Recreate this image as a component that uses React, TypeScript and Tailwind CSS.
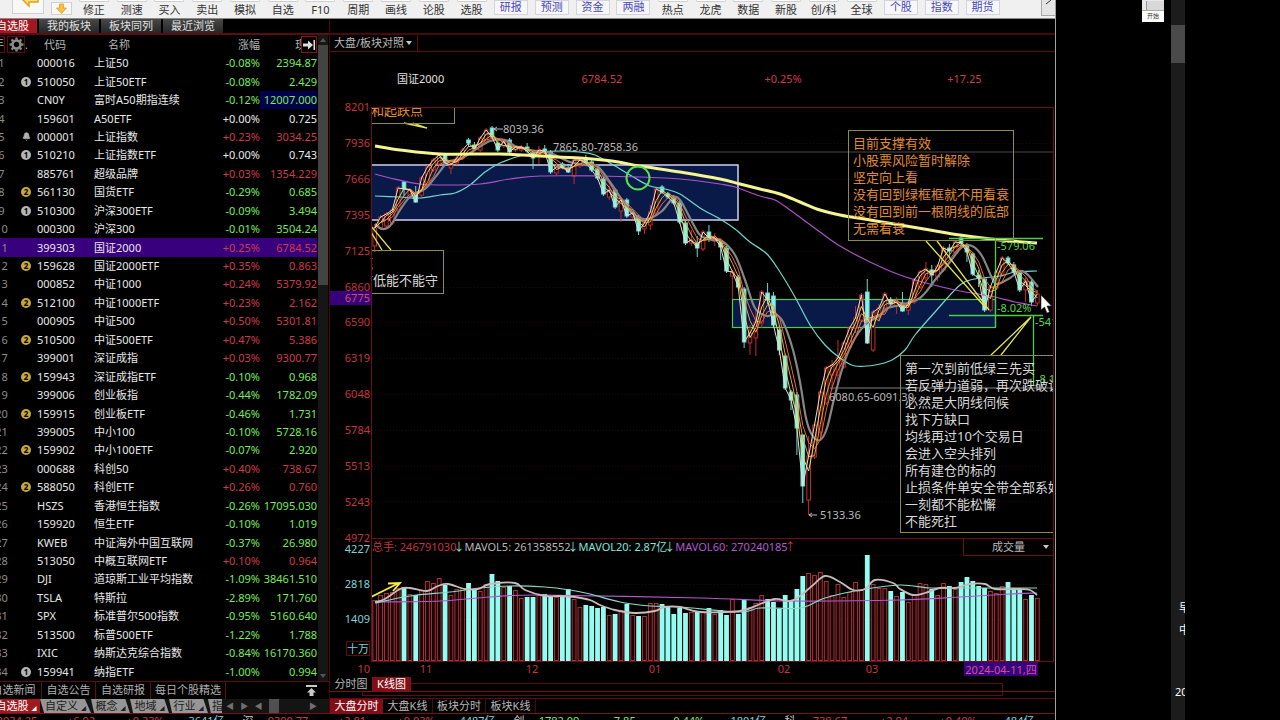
import { Bell } from "lucide-react";
import clsx from "clsx";

type Quote = [mark: string, code: string, name: string, pct: string, price: string];

// mark: "1" grey badge, "2" gold badge, "b" alarm bell
const quotes: Quote[] = [
  ["", "000016", "上证50", "-0.08%", "2394.87"],
  ["1", "510050", "上证50ETF", "-0.08%", "2.429"],
  ["", "CN0Y", "富时A50期指连续", "-0.12%", "12007.000"],
  ["", "159601", "A50ETF", "+0.00%", "0.725"],
  ["b", "000001", "上证指数", "+0.23%", "3034.25"],
  ["1", "510210", "上证指数ETF", "+0.00%", "0.743"],
  ["", "885761", "超级品牌", "+0.03%", "1354.229"],
  ["2", "561130", "国货ETF", "-0.29%", "0.685"],
  ["1", "510300", "沪深300ETF", "-0.09%", "3.494"],
  ["", "000300", "沪深300", "-0.01%", "3504.24"],
  ["", "399303", "国证2000", "+0.25%", "6784.52"],
  ["2", "159628", "国证2000ETF", "+0.35%", "0.863"],
  ["", "000852", "中证1000", "+0.24%", "5379.92"],
  ["2", "512100", "中证1000ETF", "+0.23%", "2.162"],
  ["", "000905", "中证500", "+0.50%", "5301.81"],
  ["2", "510500", "中证500ETF", "+0.47%", "5.386"],
  ["", "399001", "深证成指", "+0.03%", "9300.77"],
  ["2", "159943", "深证成指ETF", "-0.10%", "0.968"],
  ["", "399006", "创业板指", "-0.44%", "1782.09"],
  ["2", "159915", "创业板ETF", "-0.46%", "1.731"],
  ["", "399005", "中小100", "-0.10%", "5728.16"],
  ["2", "159902", "中小100ETF", "-0.07%", "2.920"],
  ["", "000688", "科创50", "+0.40%", "738.67"],
  ["2", "588050", "科创ETF", "+0.26%", "0.760"],
  ["", "HSZS", "香港恒生指数", "-0.26%", "17095.030"],
  ["", "159920", "恒生ETF", "-0.10%", "1.019"],
  ["", "KWEB", "中证海外中国互联网", "-0.37%", "26.980"],
  ["", "513050", "中概互联网ETF", "+0.10%", "0.964"],
  ["", "DJI", "道琼斯工业平均指数", "-1.09%", "38461.510"],
  ["", "TSLA", "特斯拉", "-2.89%", "171.760"],
  ["", "SPX", "标准普尔500指数", "-0.95%", "5160.640"],
  ["", "513500", "标普500ETF", "-1.22%", "1.788"],
  ["", "IXIC", "纳斯达克综合指数", "-0.84%", "16170.360"],
  ["1", "159941", "纳指ETF", "-1.00%", "0.994"],
];

const tools = [
  "修正", "测速", "买入", "卖出", "模拟", "自选", "F10", "周期", "画线", "论股", "选股",
  "*研报", "*预测", "*资金", "*两融",
  "热点", "龙虎", "数据", "新股", "创/科", "全球",
  "*个股", "*指数", "*期货",
];

const ticker = [
  ["沪", "3034.25", "+6.92", "+0.23%", "3641亿"],
  ["深", "9300.77", "+2.81", "+0.03%", "4487亿"],
  ["创", "1782.09", "-7.85", "-0.44%", "1801亿"],
  ["科", "738.67", "+2.94", "+0.40%", "484亿"],
];

// [body top, body bottom, wick top, wick bottom] on the plot
const candles: [number, number, number?, number?][] = [
  [228, 246, 224, 252], [217, 228], [214, 226], [210, 223], [188, 210],
  [182, 189, 181, 196], [190, 196], [193, 202, 186, 203], [178, 195], [167, 186],
  [160, 170], [155, 164], [155, 163], [165, 168, 162, 174], [158, 163],
  [150, 158], [140, 143, 138, 147], [145, 149, 142, 151], [138, 150], [130, 142],
  [128, 137], [143, 150, 140, 152], [141, 146], [140, 152], [147, 150],
  [147, 150], [147, 151, 143, 153], [153, 158, 150, 169], [150, 155, 146, 164], [149, 151, 145, 154],
  [152, 172], [167, 173, 164, 175], [164, 167], [168, 172, 164, 173], [160, 176, 158, 184],
  [160, 166], [158, 163, 155, 166], [162, 170, 158, 172], [169, 178], [179, 194],
  [190, 197, 186, 200], [190, 207], [200, 211, 197, 222], [200, 216], [213, 217],
  [217, 231, 215, 235], [223, 229, 221, 234], [212, 225, 205, 230], [189, 213], [187, 192],
  [194, 197], [197, 203], [203, 222], [223, 243], [240, 243, 230, 246],
  [243, 248, 236, 257], [232, 249], [232, 238, 225, 242], [238, 241, 233, 246], [242, 247, 240, 260],
  [248, 271], [272, 276, 270, 299], [277, 287], [289, 342, 287, 348], [333, 343, 325, 355],
  [322, 338, 310, 356], [292, 323, 290, 328], [293, 300, 283, 304], [296, 325, 292, 328], [330, 350, 326, 355],
  [356, 388, 354, 390], [392, 400, 390, 410], [395, 428, 392, 455], [435, 486, 435, 503], [456, 500, 436, 515],
  [425, 457], [392, 432, 390, 438], [368, 403], [365, 375, 360, 390], [358, 375, 340, 384],
  [343, 367], [328, 347], [318, 328, 306, 333], [295, 320], [292, 343, 279, 344],
  [312, 350], [308, 317, 304, 320], [294, 308], [300, 304, 297, 308], [302, 306, 297, 314],
  [303, 311, 292, 312], [304, 310, 300, 315], [280, 302], [272, 287], [269, 278, 262, 282],
  [270, 275, 265, 287], [266, 277, 264, 281], [248, 270], [248, 251, 244, 257], [242, 252],
  [238, 243], [245, 252, 243, 262], [254, 274], [275, 278, 270, 287], [279, 310],
  [287, 310], [272, 288], [258, 275], [258, 263], [265, 272, 262, 276],
  [273, 290], [281, 290, 278, 302], [282, 302, 280, 306], [294, 303, 290, 306],
];

const volumeTops = [
  600, 595, 593, 592, 588, 587, 594, 595, 590, 581, 583, 578, 585, 595, 589, 588, 583, 589, 591, 584,
  574, 581, 587, 586, 590, 598, 597, 597, 595, 594, 597, 597, 597, 589, 599, 607, 605, 606, 608, 607,
  615, 614, 610, 604, 615, 616, 616, 603, 603, 604, 607, 614, 608, 613, 612, 612, 612, 608, 614, 610,
  615, 599, 614, 599, 607, 603, 595, 599, 602, 609, 595, 601, 589, 576, 573, 575, 572, 581, 595, 584,
  597, 592, 582, 590, 555, 584, 588, 588, 591, 596, 592, 602, 594, 583, 584, 589, 595, 583, 586, 589,
  582, 577, 581, 586, 588, 591, 593, 586, 582, 588, 589, 599, 595, 598,
];

const falling = new Set([
  5, 7, 12, 16, 17, 20, 21, 23, 26, 27, 29, 30, 32, 33, 36, 37, 38, 39, 41, 43, 45, 49, 50, 51, 52, 53, 55,
  57, 59, 60, 62, 63, 67, 68, 69, 70, 71, 72, 73, 84, 88, 90, 95, 98, 100, 101, 102, 103, 104, 108, 109, 110, 112,
]);

const barX = (i: number) => 374.7 + i * 5.864;

type Point = [number, number];

const grayLine: Point[] = [[375, 224], [382, 229], [390, 226], [400, 210], [410, 197], [425, 189], [437, 175], [448, 162], [460, 159], [475, 150], [490, 141], [505, 140], [515, 146], [530, 150], [550, 153], [570, 162], [585, 165], [597, 166], [610, 182], [625, 204], [638, 217], [648, 219], [662, 211], [673, 198], [680, 200], [690, 218], [700, 235], [712, 240], [722, 241], [735, 255], [745, 280], [755, 308], [767, 316], [775, 314], [783, 322], [793, 350], [800, 382], [806, 418], [812, 435], [820, 440], [827, 428], [835, 395], [845, 360], [855, 338], [865, 325], [880, 315], [888, 308], [900, 305], [920, 298], [935, 280], [950, 262], [962, 247], [972, 246], [982, 256], [992, 278], [997, 284], [1010, 278], [1020, 271], [1028, 275], [1038, 287]];
const yellowLine: Point[] = [[375, 146], [400, 150], [440, 154], [500, 154], [540, 156], [580, 158], [612, 161], [640, 166], [680, 172], [720, 179], [740, 184], [760, 189], [780, 194], [800, 202], [820, 210], [840, 215], [870, 220], [900, 225], [930, 230], [960, 235], [1000, 240], [1037, 243]];
const magentaLine: Point[] = [[375, 174], [390, 178], [420, 184], [450, 185], [480, 184], [510, 179], [540, 176], [600, 176], [640, 177], [680, 179], [720, 184], [735, 187], [760, 196], [775, 200], [790, 210], [805, 221], [820, 232], [840, 246], [870, 262], [900, 275], [930, 284], [960, 291], [990, 296], [1015, 302], [1037, 306]];
const cyanLine: Point[] = [[375, 196], [400, 197], [420, 198], [440, 195], [455, 193], [470, 185], [485, 172], [500, 163], [520, 156], [540, 152], [560, 151], [580, 152], [595, 155], [615, 166], [635, 178], [650, 186], [665, 189], [680, 194], [700, 208], [720, 219], [735, 229], [750, 242], [767, 254], [780, 272], [795, 297], [810, 325], [825, 345], [840, 358], [855, 366], [875, 365], [892, 360], [905, 350], [915, 335], [935, 312], [960, 285], [975, 279], [1000, 276], [1015, 272], [1037, 271]];

const vol5: Point[] = [[375, 602], [385, 599], [400, 589], [410, 588], [427, 591], [438, 586], [448, 584], [465, 589], [478, 589], [490, 584], [515, 583], [525, 590], [545, 596], [560, 596], [575, 597], [590, 600], [600, 605], [615, 610], [635, 613], [655, 611], [665, 607], [680, 607], [700, 612], [740, 611], [760, 604], [775, 599], [790, 601], [800, 596], [812, 586], [825, 576], [840, 582], [853, 590], [865, 589], [875, 580], [893, 583], [900, 589], [913, 595], [925, 593], [940, 588], [955, 588], [970, 584], [985, 584], [995, 589], [1020, 589], [1030, 590], [1037, 595]];
const vol20: Point[] = [[375, 603], [410, 596], [450, 592], [480, 588], [510, 586], [545, 587], [570, 590], [590, 594], [620, 602], [650, 606], [680, 607], [740, 612], [760, 608], [800, 608], [825, 598], [860, 590], [900, 585], [930, 588], [960, 588], [1000, 588], [1037, 588]];
const vol60: Point[] = [[375, 602], [440, 601], [490, 597], [540, 595], [700, 598], [790, 601], [900, 600], [960, 597], [1010, 594], [1037, 593]];

// Catmull-Rom through the points
const curve = (p: Point[]) => {
  let d = `M${p[0][0]} ${p[0][1]}`;
  for (let i = 0; i < p.length - 1; i++) {
    const a = p[i - 1] ?? p[i];
    const b = p[i];
    const c = p[i + 1];
    const e = p[i + 2] ?? c;
    d += `C${b[0] + (c[0] - a[0]) / 6} ${b[1] + (c[1] - a[1]) / 6} ${c[0] - (e[0] - b[0]) / 6} ${c[1] - (e[1] - b[1]) / 6} ${c[0]} ${c[1]}`;
  }
  return d;
};

const average = (n: number) => {
  const closes = candles.map(([top, bottom], i) => (falling.has(i) ? bottom : top));
  return closes
    .map((_, i) => {
      const part = closes.slice(Math.max(0, i - n + 1), i + 1);
      return `${barX(i)},${part.reduce((a, b) => a + b, 0) / part.length}`;
    })
    .join(" ");
};

const tone = (v: string) =>
  v.startsWith("+0.00") ? "text-[#e8e8e8]" : v.startsWith("-") ? "text-[#78ea5c]" : "text-[#cc3c4c]";

const Caret = ({ className }: { className: string }) => (
  <svg width="6" height="4" className={clsx("pointer-events-none shrink-0", className)}>
    <path d="M0 0h6L3 4z" fill="#c8c8c8" />
  </svg>
);

const Toolbar = () => (
  <header className="flex h-[19px] shrink-0 overflow-hidden border-b border-[#8a8a8a] bg-[#f0f0f0] text-[11px] leading-[18px] text-[#333]">
    <div className="flex w-[75px] shrink-0 items-start">
      <button aria-label="返回" className="ml-3 h-[14px] w-8 border border-t-0 border-[#d0d0d0] bg-[#f8f8f8]">
        <svg width="30" height="13" className="block">
          <path d="M8 -2 L16 6 V2 H25 V-2" fill="#ffe27a" stroke="#e0a020" strokeWidth="1.5" />
        </svg>
      </button>
      <button aria-label="下移" className="mt-0.5 ml-[7px] h-[13px] w-[21px] border border-[#d0d0d0] bg-[#f8f8f8]">
        <svg width="19" height="11" className="block">
          <path d="M7.5 1h4v4h3l-5 5.500-5-5.500h3z" fill="#f8c040" stroke="#e09820" strokeWidth="0.7" />
        </svg>
      </button>
    </div>
    <nav className="mr-[38px] flex flex-1">
      {tools.map((t) =>
        t.startsWith("*") ? (
          <button key={t} className="flex flex-[408] justify-center text-[#4848b8]">
            <span className="h-[15px] w-[34px] border border-[#d4d4dc] bg-[#f7f7fa] leading-[12px]">{t.slice(1)}</span>
          </button>
        ) : (
          <button key={t} className="flex flex-[377] flex-col items-center">
            <span className="h-0.5 w-[30px] shrink-0 rounded-b-sm border border-t-0 border-[#cfcfcf] bg-white" />
            <span className="leading-[15px]">{t}</span>
          </button>
        ),
      )}
    </nav>
    <button aria-label="更多" className="flex h-4 w-[14px] items-start justify-center border border-r-0 border-t-0 border-[#a8a8a8] bg-[#e4e4e4]">
      <svg width="8" height="5"><path d="M1 4 L6 0" stroke="#333" fill="none" /></svg>
    </button>
  </header>
);

const Badge = ({ mark }: { mark: string }) => {
  if (mark === "b") return <Bell className="mx-auto block fill-[#b0b0b0] text-[#b0b0b0]" size={9} />;
  if (!mark) return null;
  return (
    <span
      className={clsx(
        "mx-auto block h-[10px] w-[10px] rounded-full text-center text-[8px] leading-[10px] font-bold text-black",
        mark === "1" ? "bg-[#b4b4b4]" : "bg-[#c8a838]",
      )}
    >
      {mark}
    </span>
  );
};

const Gear = () => (
  <svg width="15" height="15" viewBox="-8 -8 16 16">
    <circle r="4.2" fill="none" stroke="#8c8c8c" strokeWidth="2.600" />
    {[0, 45, 90, 135, 180, 225, 270, 315].map((a) => (
      <path key={a} d="M-1.500 -5 L-1 -7.500 H1 L1.500 -5z" fill="#8c8c8c" transform={`rotate(${a})`} />
    ))}
  </svg>
);

const QuoteTable = () => (
  <div className="flex min-h-0 flex-1">
    <div className="w-[318px] overflow-hidden">
      <table className="-ml-4 h-full w-[333px] table-fixed border-collapse leading-4 text-[#e8e8e8]">
        <colgroup>
          <col className="w-[35px]" />
          <col className="w-[14px]" />
          <col className="w-[61px]" />
          <col className="w-[120px]" />
          <col className="w-[46px]" />
          <col className="w-[57px]" />
        </colgroup>
        <thead>
          <tr className="h-[19px] text-[#b4b4b4]">
            <th colSpan={2} className="p-0 font-normal">
              <div className="flex h-[17px] items-center">
                <span className="h-full w-[21px] border border-[#5c0c12] text-right leading-[14px]">年</span>
                <button aria-label="设置" className="ml-0.5 flex h-full w-[18px] items-center justify-center border border-[#5c0c12]">
                  <Gear />
                </button>
                <span>.</span>
              </div>
            </th>
            <th className="p-0 pl-[11px] text-left font-normal">代码</th>
            <th className="p-0 pl-[14px] text-left font-normal">名称</th>
            <th className="p-0 text-right font-normal">涨幅</th>
            <th className="p-0 font-normal">
              <div className="flex h-[17px] items-center justify-end">
                <span className="w-[6px] overflow-hidden">现</span>
                <button aria-label="展开" className="flex h-full w-4 items-center justify-center border border-[#8c1018] bg-black">
                  <svg width="13" height="10"><path d="M0 3.500h5V0.500L10 5 5 9.500V6.500H0z M10.500 0h1.500v10h-1.500z" fill="#dedede" /></svg>
                </button>
              </div>
            </th>
          </tr>
        </thead>
        <tbody>
          {quotes.map(([mark, code, name, pct, price], i) => (
            <tr key={code} className={clsx(code === "399303" && "bg-[#38007c]")}>
              <td className="p-0 text-center text-[#8c8c8c]">{i + 1}</td>
              <td className="p-0"><Badge mark={mark} /></td>
              <td className="p-0 pl-1">{code}</td>
              <td className="p-0 whitespace-nowrap">{name}</td>
              <td className={clsx("p-0 text-right", tone(pct))}>{pct}</td>
              <td className={clsx("p-0 text-right", tone(pct), code === "CN0Y" && "bg-[#00004c]")}>{price}</td>
            </tr>
          ))}
        </tbody>
      </table>
    </div>
    <div className="flex w-[10px] flex-col items-center bg-[#161616]">
      <svg width="6" height="4" className="my-[3px] shrink-0"><path d="M0 4h6L3 0z" fill="#555" /></svg>
      <span className="h-[240px] w-full bg-[#434343]" />
      <svg width="6" height="4" className="mt-auto mb-[3px] shrink-0"><path d="M0 0h6L3 4z" fill="#555" /></svg>
    </div>
  </div>
);

const Watchlist = () => (
  <aside className="flex w-[330px] shrink-0 flex-col border-r border-[#4a080e] text-[11px]">
    <nav className="flex h-[14px] shrink-0 gap-0.5 leading-[14px] text-[#e0e0e0]">
      <button className="w-[37px] overflow-hidden bg-[#a01820] text-white">
        <span className="-ml-3 whitespace-nowrap">自选股</span>
      </button>
      {["我的板块", "板块同列", "最近浏览"].map((t) => (
        <button key={t} className="w-[60px] bg-gradient-to-b from-[#484848] to-[#262626]">{t}</button>
      ))}
    </nav>
    <div className="h-0.5 shrink-0 bg-[#5c0c12]" />
    <QuoteTable />
    <nav className="flex h-[18px] shrink-0 items-center border-t border-[#5c0c12] text-[#b0b0b0]">
      <button className="h-full w-[42px] overflow-hidden border-r border-[#5c0c12]">
        <span className="-ml-[14px] whitespace-nowrap">自选新闻</span>
      </button>
      <button className="h-full w-[54px] border-r border-[#5c0c12]">自选公告</button>
      <button className="h-full w-[55px] border-r border-[#5c0c12]">自选研报</button>
      <button className="h-full w-[75px] border-r border-[#5c0c12]">每日个股精选</button>
      <button aria-label="置顶" className="ml-auto mr-3">
        <svg width="11" height="12" className="block"><path d="M0 0h11v2H0z M5.500 3L10 7.500H7.500V11h-4V7.500H1z" fill="#c8c8c8" /></svg>
      </button>
    </nav>
    <nav className="flex h-[14px] shrink-0 items-stretch bg-[#141414] leading-[14px] text-[#202020]">
      <button className="w-10 overflow-hidden bg-[#a01820] whitespace-nowrap text-white">
        <span className="-ml-2">自选股</span> <span className="text-[5px]">◢</span>
      </button>
      {["自定义", "概念", "地域", "行业"].map((t) => (
        <button
          key={t}
          className={clsx(
            "bg-[#969696] [clip-path:polygon(0_0,88%_0,100%_100%,8%_100%)]",
            t.length > 2 ? "w-[51px]" : "w-[39px]",
          )}
        >
          {t} <span className="text-[5px]">◢</span>
        </button>
      ))}
      <button className="w-[14px] overflow-hidden bg-[#969696] text-left [clip-path:polygon(0_0,100%_0,100%_100%,20%_100%)]">
        <span className="ml-1">指</span>
      </button>
      <div className="flex flex-1 items-center justify-between pr-3 pl-1 text-[8px] text-[#707070]">
        <span>◀</span>
        <span>▶</span>
        <span>◀</span>
        <span className="h-full w-[10px] bg-[#505050]" />
        <span className="ml-6">▶</span>
      </div>
    </nav>
  </aside>
);

const Note = ({ lines, className }: { lines: string[]; className: string }) => (
  <div className={clsx("absolute flex flex-col justify-between border border-[#8c8c48] px-1 text-[13px] leading-[17px] whitespace-nowrap", className)}>
    {lines.map((l) => <p key={l}>{l}</p>)}
  </div>
);

const PriceChart = () => (
  <div className="relative min-w-0 flex-1 overflow-hidden border border-[#6c0e16] border-b-0">
    <svg className="absolute inset-0 h-full w-full" fill="none">
      <g transform="translate(-372 -108)">
        {[143, 179, 215, 251, 287, 322, 358, 394, 430, 466, 501].map((y) => (
          <path key={y} d={`M372 ${y}.5H2400`} stroke="#260606" strokeDasharray="1 2" />
        ))}
        <rect x="360" y="165" width="378" height="55" fill="#0a1a48" stroke="#d0d0f0" strokeWidth="1.500" />
        <rect x="732.500" y="299.500" width="263" height="28" fill="#0a1a48" stroke="#50cc48" strokeWidth="1.200" />
        <path d="M550 152H1053" stroke="#484848" />
        <path d="M830 388H1053" stroke="#404040" strokeWidth="2" />
        {candles.map(([top, bottom, high, low], i) => {
          const x = barX(i);
          const down = falling.has(i);
          return (
            <g key={i} stroke={down ? "#68dcd4" : "#c42c30"}>
              <path d={`M${x} ${high ?? top - 2}V${top}M${x} ${bottom}V${low ?? bottom + 2}`} />
              <rect x={x - 1.8} y={top} width="3.600" height={bottom - top} fill={down ? "#8cf4e4" : "#000"} />
            </g>
          );
        })}
        <path d={curve(cyanLine)} stroke="#70d8cc" strokeWidth="1.200" />
        <path d={curve(magentaLine)} stroke="#b050c8" strokeWidth="1.200" />
        <path d={curve(grayLine)} stroke="#868686" strokeWidth="2.200" />
        <polyline points={average(4)} stroke="#e86838" />
        <polyline points={average(3)} stroke="#e89c40" />
        <polyline points={average(2)} stroke="#f0dc50" />
        <polyline points={average(1)} stroke="#f0d8d0" />
        <path d={curve(yellowLine)} stroke="#f4f490" strokeWidth="3" />
        <circle cx="638" cy="178" r="11.500" stroke="#58e050" strokeWidth="2" />
        <path d="M949 238.500H1043M949 315.500H1043M995.500 238V327M1033.500 315V385" stroke="#50cc48" strokeWidth="1.300" />
        <path d="M503 129H494m3-2l-3 2 3 2M817 515H809m3-2l-3 2 3 2" stroke="#b8b8b8" />
        <path d="M371 226L391 250M371 232L382 250M404 123L427 128M413 123L427 128M926 241L985 307M937 241L989 310M991 355L1031 317M1001 355L1031 317" stroke="#e4e450" strokeWidth="1.300" />
        <g className="text-[11px]" fill="#b8b8b8">
          <text x="503" y="133">8039.36</text>
          <text x="553" y="151">7865.80-7858.36</text>
          <text x="829" y="401">6080.65-6091.30</text>
          <text x="820" y="519">5133.36</text>
        </g>
        <g className="text-[11px]" fill="#58d848">
          <text x="997" y="250">-579.06</text>
          <text x="997" y="312">-8.02%</text>
          <text x="1035" y="326">-541.20</text>
          <text x="1036" y="383">-8.13%</text>
        </g>
        <path d="M1041 295V310L1044.500 307 1047 313 1049.500 312 1047 306H1051.500z" fill="#fff" stroke="#222" strokeWidth="0.600" />
      </g>
    </svg>
    <Note className="top-[-26px] left-[-6px] h-[42px] w-[89px] justify-end! pb-1 text-[#e08c30]" lines={["和起跌点"]} />
    <Note className="top-[142px] left-[-17px] h-[44px] w-[89px] pt-1 pb-1.5 text-[#d8d8d8]" lines={["底", "前低能不能守"]} />
    <Note
      className="top-[22px] left-[476px] h-[111px] w-[166px] pt-1 pb-[3px] text-[#e08c30]"
      lines={["目前支撑有效", "小股票风险暂时解除", "坚定向上看", "没有回到绿框框就不用看衰", "没有回到前一根阴线的底部", "无需看衰"]}
    />
    <Note
      className="top-[247px] left-[528px] h-[178px] w-[190px] pt-1 pb-1 text-[#d8d8d8]"
      lines={["第一次到前低绿三先买", "若反弹力道弱，再次跌破该", "必然是大阴线伺候", "找下方缺口", "均线再过10个交易日", "会进入空头排列", "所有建仓的标的", "止损条件单安全带全部系好", "一刻都不能松懈", "不能死扛"]}
    />
  </div>
);

const Trend = ({ up }: { up?: boolean }) => (
  <span className={clsx("inline-flex w-[5px] justify-center", up ? "text-[#c43440]" : "text-[#84e4dc]")}>{up ? "↑" : "↓"}</span>
);

const VolumeChart = () => (
  <div className="relative min-w-0 flex-1 overflow-hidden border border-[#6c0e16]">
    <svg className="absolute inset-0 h-full w-full" fill="none">
      <g transform="translate(-372 -539)">
        <path d="M372 584.500H2400M372 619.500H2400M372 555.500H960" stroke="#260606" strokeDasharray="1 2" />
        {volumeTops.map((y, i) =>
          falling.has(i) ? (
            <rect key={i} x={barX(i) - 2.4} y={y} width="4.800" height={661 - y} fill="#94fcf0" />
          ) : (
            <rect key={i} x={barX(i) - 1.900} y={y + 0.500} width="3.800" height={660 - y} fill="#180406" stroke="#a83238" />
          ),
        )}
        <path d={curve(vol60)} stroke="#b458cc" strokeWidth="1.200" />
        <path d={curve(vol20)} stroke="#88dccc" strokeWidth="1.200" />
        <path d={curve(vol5)} stroke="#c8bcbc" strokeWidth="1.800" />
        <path d="M371 597L399 583M388 583.500L400 583 393 591" stroke="#f4ec40" strokeWidth="1.800" />
      </g>
    </svg>
    <div className="relative flex h-[17px] justify-between">
      <p className="flex gap-[3px] leading-4 whitespace-nowrap text-[#b8b8b8]">
        <span className="text-[#c43440]">总手: 246791030<Trend /></span>
        <span>MAVOL5: 261358552<Trend /></span>
        <span className="text-[#84e4dc]">MAVOL20: 2.87亿<Trend /></span>
        <span className="text-[#b458cc]">MAVOL60: 270240185<Trend up /></span>
      </p>
      <div className="relative flex w-[90px] items-center border-b border-l border-[#6c0e16]">
        <select aria-label="指标" className="w-full appearance-none bg-transparent pl-7 leading-4 text-[#b8b8b8]">
          <option>成交量</option>
        </select>
        <Caret className="absolute right-1" />
      </div>
    </div>
  </div>
);

const months = [["11", 426], ["12", 532], ["01", 655], ["02", 784], ["03", 872]] as const;

const tabBase = "h-full border-r border-[#4a080e] text-[#b8b8b8]";

const ChartPane = () => (
  <main className="flex min-w-0 flex-1 flex-col text-[11px]">
    <div className="mt-[14px] h-0.5 shrink-0 bg-[#4a080e]" />
    <div className="flex h-[17px] shrink-0 border-b border-[#5c0c12]">
      <div className="relative flex w-[88px] items-center border-r border-[#5c0c12]">
        <select aria-label="对照" className="w-full appearance-none bg-transparent pl-1 leading-4 text-[#b8b8b8]">
          <option>大盘/板块对照</option>
        </select>
        <Caret className="absolute right-[5px]" />
      </div>
    </div>
    <div className="grid h-[55px] shrink-0 grid-cols-4 items-center text-center text-[#cc3c4c]">
      <span className="text-[#e0e0e0]">国证2000</span>
      <span>6784.52</span>
      <span>+0.25%</span>
      <span>+17.25</span>
    </div>
    <div className="flex min-h-0 flex-1 pr-px">
      <div className="relative w-[41px] shrink-0">
        <div className="absolute inset-x-0 -top-2 -bottom-2 flex flex-col justify-between pr-px text-right leading-4 text-[#c43440]">
          {[8201, 7936, 7666, 7395, 7125, 6860, 6590, 6319, 6048, 5784, 5513, 5243, 4972].map((v) => <span key={v}>{v}</span>)}
        </div>
        <span className="absolute inset-x-0 top-[184px] bg-[#38007c] pr-px text-right leading-[14px] text-[#d05068]">6775</span>
      </div>
      <PriceChart />
    </div>
    <div className="flex h-[124px] shrink-0 pr-px">
      <div className="flex w-[41px] shrink-0 flex-col items-end gap-[21px] pt-1 pr-px leading-[14px] text-[#7cd4dc]">
        <span>4227</span>
        <span>2818</span>
        <span>1409</span>
        <span className="-mt-1.5 border border-[#5c0c12] leading-[13px]">十万</span>
      </div>
      <VolumeChart />
    </div>
    <div className="flex h-[15px] shrink-0">
      <span className="w-[41px] pr-px text-right leading-[14px] text-[#c43440]">10</span>
      <svg className="h-full flex-1 text-[11px]" fill="#c43440" textAnchor="middle">
        <g transform="translate(-371 -662)">
          <rect x="964" y="662" width="74" height="14" fill="#38007c" />
          {months.map(([m, x]) => <text key={m} x={x} y="673">{m}</text>)}
          <text x="1001" y="674" fill="#d05098">2024-04-11,四</text>
        </g>
      </svg>
    </div>
    <div className="relative h-[21px] shrink-0">
      <div className="absolute top-1.5 right-[52px] left-8 h-[13px] border border-[#5c0c12]" />
      <div className="relative flex h-[15px] border-b border-[#7c1018] leading-[14px]">
        <button className="w-[42px] bg-black text-[#b8b8b8]">分时图</button>
        <button className="w-[39px] bg-[#840e16] text-white">K线图</button>
      </div>
    </div>
    <nav className="flex h-[15px] shrink-0 border-t border-[#5c0c12] leading-[14px]">
      <button className="w-[53px] bg-[#840e16] text-white">大盘分时</button>
      <button className={clsx(tabBase, "w-[50px]")}>大盘K线</button>
      <button className={clsx(tabBase, "w-[53px]")}>板块分时</button>
      <button className={clsx(tabBase, "w-[50px]")}>板块K线</button>
    </nav>
  </main>
);

const Ticker = () => (
  <footer className="h-[7px] shrink-0 overflow-hidden border-t border-[#7c1018]">
    <div className="-ml-[33px] flex text-[11px] leading-[13px]">
      {ticker.map(([name, price, diff, pct, amount]) => (
        <div key={name} className="grid w-[271px] shrink-0 grid-cols-[20px_60px_68px_60px_63px] text-center">
          <span className="text-[#c8c8c8]">{name}</span>
          <span className={tone(diff)}>{price}</span>
          <span className={tone(diff)}>{diff}</span>
          <span className={tone(pct)}>{pct}</span>
          <span className="text-[#7cd4dc]">{amount}</span>
        </div>
      ))}
    </div>
  </footer>
);

const DesktopEdge = () => (
  <div className="flex w-[224px] shrink-0 pl-[86px] text-[11px]">
    <div className="h-[22px] w-[22px] bg-[#e8e8e8]">
      <div className="mt-px ml-1 h-[9px] border-l border-[#999] bg-[#d8d8d8]" />
      <button className="block h-3 w-full border-t border-[#aaa] bg-white text-[6px] leading-[11px] text-[#333]">开始</button>
    </div>
    <div className="ml-[7px] flex w-[14px] flex-col overflow-hidden bg-[#1c1c1c] text-white">
      <div className="mt-[25px] h-[38px] shrink-0 bg-[#4a4a4a]" />
      <div className="mt-auto flex flex-col gap-1.5 whitespace-nowrap">
        <span className="pl-2">早</span>
        <span className="pl-2">中</span>
      </div>
      <span className="mt-[45px] mb-5 pl-1">2024</span>
    </div>
  </div>
);

export default function App() {
  return (
    <div className="flex h-screen overflow-hidden bg-black font-['Noto_Sans','Noto_Sans_CJK_SC',sans-serif]">
      <div className="flex min-w-0 flex-1 flex-col border-r border-[#a0a0a0]">
        <Toolbar />
        <div className="flex min-h-0 flex-1">
          <Watchlist />
          <ChartPane />
        </div>
        <Ticker />
      </div>
      <DesktopEdge />
    </div>
  );
}
